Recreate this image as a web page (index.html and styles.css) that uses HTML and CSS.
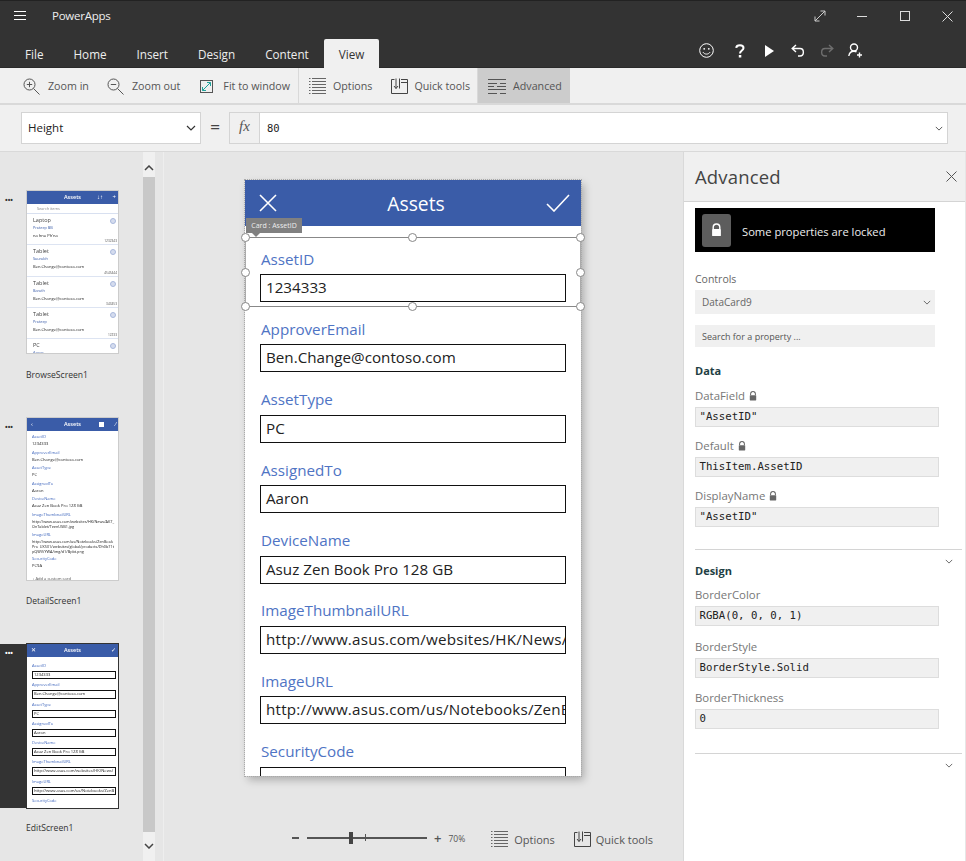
FILE: index.html
```html
<!DOCTYPE html>
<html lang="en">
<head>
<meta charset="utf-8">
<title>PowerApps</title>
<link rel="stylesheet" href="styles.css">
</head>
<body>
<svg class="defs" width="0" height="0" aria-hidden="true">
  <symbol id="lock" viewBox="0 0 10 12"><path d="M2 5V3.500a3 3 0 0 1 6 0V5" fill="none" stroke="currentColor" stroke-width="1.300"/><rect x="1" y="5" width="8" height="6.500" rx=".6" fill="currentColor"/></symbol>
  <symbol id="options" viewBox="0 0 17 16"><path d="M0 .5h1.500M3 .5h14M0 3.500h1.500M3 3.500h14M0 6.500h1.500M3 6.500h14M0 9.500h1.500M3 9.500h14M0 12.500h1.500M3 12.500h14M0 15.500h1.500M3 15.500h14" fill="none" stroke="#666" stroke-width="1"/></symbol>
  <symbol id="quick" viewBox="0 0 17 16"><path d="M.5 1.500h3M.5 1.500v14h16v-14h-6.500M10 4.500h6.500M11 1.500h2M5 .5v10M3 8l2 2.500L7 8M8.500 .5v10" fill="none" stroke="#444" stroke-width="1"/></symbol>
  <symbol id="chev" viewBox="0 0 10 6"><path d="M1 1l4 4 4-4" fill="none" stroke="currentColor" stroke-width="1.200"/></symbol>
</svg>
<div class="app">
  <header class="titlebar">
    <div class="topline">
      <svg class="burger" width="12" height="10" viewBox="0 0 12 10"><path d="M0 .5h12M0 4.500h12M0 8.500h12" stroke="#fff" stroke-width="1"/></svg>
      <span class="brand">PowerApps</span>
      <div class="winbtns">
        <svg width="12" height="12" viewBox="0 0 12 12"><path d="M1 11L11 1M6.500 1H11V5.500M1 6.500V11H5.500" fill="none" stroke="#ccc" stroke-width="1"/></svg>
        <svg width="11" height="11" viewBox="0 0 11 11"><path d="M0 5.500h10" stroke="#ddd" stroke-width="1"/></svg>
        <svg width="10" height="10" viewBox="0 0 10 10"><rect x=".5" y=".5" width="9" height="9" fill="none" stroke="#ddd"/></svg>
        <svg width="11" height="11" viewBox="0 0 11 11"><path d="M.5 .5l10 10M10.500 .5l-10 10" stroke="#ddd" stroke-width="1"/></svg>
      </div>
    </div>
    <div class="tabline">
      <nav class="tabs">
        <span class="tab">File</span><span class="tab">Home</span><span class="tab">Insert</span><span class="tab">Design</span><span class="tab">Content</span><span class="tab active">View</span>
      </nav>
      <div class="actions">
        <svg width="15" height="15" viewBox="0 0 15 15"><circle cx="7.500" cy="7.500" r="6.800" fill="none" stroke="#fff" stroke-width="1"/><circle cx="5.200" cy="5.800" r=".9" fill="#fff"/><circle cx="9.800" cy="5.800" r=".9" fill="#fff"/><path d="M4 9.200c1.500 2.500 5.500 2.500 7 0" fill="none" stroke="#fff"/></svg>
        <svg width="10" height="14" viewBox="0 0 10 14"><path d="M1.200 3.800C1.500 .6 8.500 .4 8.500 4c0 2.500-3.500 2.500-3.500 5.500" fill="none" stroke="#fff" stroke-width="2"/><rect x="3.800" y="11" width="2.500" height="2.500" fill="#fff"/></svg>
        <svg width="9" height="12" viewBox="0 0 9 12"><path d="M0 0l9 6-9 6z" fill="#fff"/></svg>
        <svg width="14" height="14" viewBox="0 0 14 14"><path d="M5 1L1.200 4.500 5 8M1.500 4.500h7.500c4.500 0 4.500 7.500 0 7.500H7" fill="none" stroke="#fff" stroke-width="1.400"/></svg>
        <svg width="14" height="14" viewBox="0 0 14 14"><path d="M9 1l3.800 3.500L9 8M12.500 4.500H5c-4.500 0-4.500 7.500 0 7.500h2" fill="none" stroke="#6e6e6e" stroke-width="1.400"/></svg>
        <svg width="15" height="15" viewBox="0 0 15 15"><circle cx="6" cy="4.500" r="3.500" fill="none" stroke="#fff" stroke-width="1.400"/><path d="M.8 13c.5-3 2.200-4.800 5.200-4.800 1 0 1.800.2 2.500.6" fill="none" stroke="#fff" stroke-width="1.400"/><path d="M11.500 9.500v5M9 12h5" stroke="#fff" stroke-width="1.400"/></svg>
      </div>
    </div>
  </header>

  <div class="toolbar">
    <div class="toolgroup first">
      <span class="tool t-zi"><svg width="17" height="17" viewBox="0 0 17 17"><circle cx="6.500" cy="6.500" r="5.500" fill="none" stroke="#555"/><path d="M10.500 10.500l6 6M3.800 6.500h5.400M6.500 3.800v5.400" stroke="#555" fill="none"/></svg>Zoom in</span>
      <span class="tool t-zo"><svg width="17" height="17" viewBox="0 0 17 17"><circle cx="6.500" cy="6.500" r="5.500" fill="none" stroke="#555"/><path d="M10.500 10.500l6 6M3.800 6.500h5.400" stroke="#555" fill="none"/></svg>Zoom out</span>
      <span class="tool t-fit"><svg width="13" height="13" viewBox="0 0 13 13"><rect x=".5" y=".5" width="12" height="12" fill="none" stroke="#555"/><path d="M2.500 10.500l8-8M7 2.500h3.500V6M2.500 7v3.500H6" fill="none" stroke="#1fa39b"/></svg>Fit to window</span>
    </div>
    <div class="toolgroup">
      <span class="tool t-opt"><svg width="17" height="16"><use href="#options"/></svg>Options</span>
      <span class="tool t-qt"><svg width="17" height="16"><use href="#quick"/></svg>Quick tools</span>
    </div>
    <span class="tool advanced"><svg width="18" height="15" viewBox="0 0 18 15"><path d="M0 .5h18M0 4.500h9M12 4.500h6M0 7.500h6M9 7.500h9M0 10.500h18M0 14.500h9M12 14.500h6" stroke="#555" fill="none"/></svg>Advanced</span>
  </div>

  <div class="formulabar">
    <div class="propselect"><span>Height</span><svg class="chev-s" width="10" height="6"><use href="#chev"/></svg></div>
    <span class="equals">=</span>
    <div class="formula">
      <span class="fx">fx</span>
      <span class="fvalue">80</span>
      <svg class="chev-f" width="8" height="5"><use href="#chev"/></svg>
    </div>
  </div>

  <main class="workspace">
    <aside class="screens">
      <div class="screen-list">
        <section class="screen">
          <div class="thumb-row">
            <span class="dots">•••</span>
            <div class="thumb">
              <div class="th-head"><span class="th-title">Assets</span><span class="th-ic r1">↓↑</span><span class="th-ic r2">+</span></div>
              <div class="th-search">Search items</div>
              <div class="th-item sep"><b>Laptop</b><i>Prateep BB</i><em>na hna Ph'na</em><u>1232343</u><s></s></div>
              <div class="th-item sep"><b>Tablet</b><i>Saurabh</i><em>Ben.Change@contoso.com</em><u>4545444</u><s></s></div>
              <div class="th-item sep"><b>Tablet</b><i>Barath</i><em>Ben.Change@contoso.com</em><u>343453</u><s></s></div>
              <div class="th-item sep"><b>Tablet</b><i>Prateep</i><em>Ben.Change@contoso.com</em><u>12233</u><s></s></div>
              <div class="th-item"><b>PC</b><i>Aaron</i><s></s></div>
            </div>
          </div>
          <p class="screen-name">BrowseScreen1</p>
        </section>
        <section class="screen">
          <div class="thumb-row">
            <span class="dots">•••</span>
            <div class="thumb">
              <div class="th-head"><span class="th-ic l1">‹</span><span class="th-title">Assets</span><span class="th-ic r1 sq"></span><span class="th-ic r2">⁄</span></div>
              <div class="th-detail">
                <i>AssetID</i><em>1234333</em>
                <i>ApproverEmail</i><em>Ben.Change@contoso.com</em>
                <i>AssetType</i><em>PC</em>
                <i>AssignedTo</i><em>Aaron</em>
                <i>DeviceName</i><em>Asuz Zen Book Pro 128 GB</em>
                <i>ImageThumbnailURL</i><em class="wrap">http://www.asus.com/websites/HK/News/AK7_OnTablet/TeenUSB1.jpg</em>
                <i>ImageURL</i><em class="wrap">http://www.asus.com/us/Notebooks/ZenBook_Pro_UX501/websites/global/products/Dh0b71tpQWV/YWA/img/d1/Bpbt.png</em>
                <i>SecurityCode</i><em>PC9A</em>
                <em class="add">+ Add a custom card</em>
              </div>
            </div>
          </div>
          <p class="screen-name">DetailScreen1</p>
        </section>
        <section class="screen">
          <div class="thumb-row selected">
            <span class="dots">•••</span>
            <div class="thumb dark">
              <div class="th-head"><span class="th-ic l1">✕</span><span class="th-title">Assets</span><span class="th-ic r2">✓</span></div>
              <div class="th-edit">
                <i>AssetID</i><em>1234333</em>
                <i>ApproverEmail</i><em>Ben.Change@contoso.com</em>
                <i>AssetType</i><em>PC</em>
                <i>AssignedTo</i><em>Aaron</em>
                <i>DeviceName</i><em>Asuz Zen Book Pro 128 GB</em>
                <i>ImageThumbnailURL</i><em>http://www.asus.com/websites/HK/News/</em>
                <i>ImageURL</i><em>http://www.asus.com/us/Notebooks/ZenB</em>
                <i>SecurityCode</i>
              </div>
            </div>
          </div>
          <p class="screen-name edit">EditScreen1</p>
        </section>
      </div>
      <div class="scrollbar">
        <span class="sb-btn top"><svg width="10" height="6" viewBox="0 0 10 6"><path d="M1 5l4-4 4 4" fill="none" stroke="#444" stroke-width="1.500"/></svg></span>
        <span class="sb-thumb"></span>
        <span class="sb-btn bottom"><svg width="10" height="6" viewBox="0 0 10 6"><path d="M1 1l4 4 4-4" fill="none" stroke="#444" stroke-width="1.500"/></svg></span>
      </div>
    </aside>

    <section class="canvas">
      <div class="phone">
        <div class="phone-head">
          <svg width="18" height="18" viewBox="0 0 18 18"><path d="M1 1l16 16M17 1L1 17" stroke="#fff" stroke-width="1.600"/></svg>
          <span class="phone-title">Assets</span>
          <svg width="24" height="18" viewBox="0 0 24 18"><path d="M1 10l7 7L23 1" fill="none" stroke="#fff" stroke-width="1.600"/></svg>
        </div>
        <div class="cards">
          <div class="card"><label class="card-label">AssetID</label><div class="card-input">1234333</div></div>
          <div class="card"><label class="card-label">ApproverEmail</label><div class="card-input">Ben.Change@contoso.com</div></div>
          <div class="card"><label class="card-label">AssetType</label><div class="card-input">PC</div></div>
          <div class="card"><label class="card-label">AssignedTo</label><div class="card-input">Aaron</div></div>
          <div class="card"><label class="card-label">DeviceName</label><div class="card-input">Asuz Zen Book Pro 128 GB</div></div>
          <div class="card"><label class="card-label">ImageThumbnailURL</label><div class="card-input long">http://www.asus.com/websites/HK/News/</div></div>
          <div class="card"><label class="card-label">ImageURL</label><div class="card-input long">http://www.asus.com/us/Notebooks/ZenB</div></div>
          <div class="card"><label class="card-label">SecurityCode</label><div class="card-input">PC9A</div></div>
        </div>
        <div class="selection">
          <span class="sel-tip">Card : AssetID</span>
          <span class="h tl"></span><span class="h tc"></span><span class="h tr"></span>
          <span class="h ml"></span><span class="h mr"></span>
          <span class="h bl"></span><span class="h bc"></span><span class="h br"></span>
        </div>
      </div>
      <div class="statusbar">
        <span class="zoom-minus"></span>
        <span class="slider"><span class="knob"></span><span class="tick"></span></span>
        <span class="zoom-plus">+</span>
        <span class="zoom-val">70%</span>
        <span class="tool s-opt"><svg width="17" height="16"><use href="#options"/></svg>Options</span>
        <span class="tool s-qt"><svg width="17" height="16"><use href="#quick"/></svg>Quick tools</span>
      </div>
    </section>

    <aside class="panel">
      <div class="panel-head"><h2>Advanced</h2><svg width="11" height="11" viewBox="0 0 11 11"><path d="M.5 .5l10 10M10.500 .5l-10 10" stroke="#555" stroke-width="1"/></svg></div>
      <div class="panel-body">
        <div class="locked">
          <span class="lock-box"><svg width="11" height="14"><use href="#lock"/></svg></span>
          <span class="lock-text">Some properties are locked</span>
        </div>
        <p class="ctl-label">Controls</p>
        <div class="ctl-select"><span>DataCard9</span><svg width="8" height="5"><use href="#chev"/></svg></div>
        <div class="ctl-search">Search for a property ...</div>
        <h3 class="sect first">Data</h3>
        <div class="prop"><p>DataField <svg width="8" height="10"><use href="#lock"/></svg></p><div class="val">"AssetID"</div></div>
        <div class="prop"><p>Default <svg width="8" height="10"><use href="#lock"/></svg></p><div class="val">ThisItem.AssetID</div></div>
        <div class="prop"><p>DisplayName <svg width="8" height="10"><use href="#lock"/></svg></p><div class="val">"AssetID"</div></div>
        <div class="divider"><svg width="8" height="5"><use href="#chev"/></svg></div>
        <h3 class="sect">Design</h3>
        <div class="prop p2"><p>BorderColor</p><div class="val">RGBA(0, 0, 0, 1)</div></div>
        <div class="prop p2"><p>BorderStyle</p><div class="val">BorderStyle.Solid</div></div>
        <div class="prop p2"><p>BorderThickness</p><div class="val">0</div></div>
        <div class="divider d2"><svg width="8" height="5"><use href="#chev"/></svg></div>
      </div>
    </aside>
  </main>
</div>
</body>
</html>
```

FILE: styles.css
```css
* { box-sizing: border-box; }
html, body { margin: 0; padding: 0; height: 100%; }
body { font-family: "Open Sans", "Noto Sans", sans-serif; color: #333; background: #e6e6e6; overflow: hidden; }
p, h2, h3 { margin: 0; font-weight: normal; }
.defs { position: absolute; }
.app { width: 966px; height: 861px; display: flex; flex-direction: column; }

/* Title bar */
.titlebar { height: 68px; background: #333; border-top: 1px solid #222; border-bottom: 1px solid #2a2a2a; color: #fff; display: flex; flex-direction: column; }
.topline { height: 38px; display: flex; align-items: center; padding: 0 0 9px 14px; }
.burger { display: block; }
.brand { margin-left: 26px; font-size: 11.500px; letter-spacing: -.25px; color: #eee; }
.winbtns { margin-left: auto; display: flex; align-items: center; width: 152px; gap: 32px; padding-top: 1px; }
.winbtns svg:nth-child(2) { margin-left: -1px; }
.tabline { flex: 1; display: flex; align-items: flex-end; }
.tabs { display: flex; padding-left: 10px; margin-bottom: -1px; }
.tab { height: 29px; padding: 5px 15px 0; font-size: 11.700px; color: #eee; line-height: 20px; }
.tab.active { background: #f0f0f0; color: #333; border-radius: 2px 2px 0 0; }
.actions { margin-left: auto; display: flex; align-items: center; padding-bottom: 9px; width: 267px; }
.actions svg:nth-child(2) { margin-left: 21px; }
.actions svg:nth-child(3) { margin-left: 20px; }
.actions svg:nth-child(4) { margin-left: 17px; }
.actions svg:nth-child(5) { margin-left: 15px; }
.actions svg:nth-child(6) { margin-left: 14px; }

/* Toolbar */
.toolbar { height: 37px; background: #f0f0f0; border-bottom: 2px solid #d9d9d9; display: flex; color: #555; }
.toolgroup { display: flex; align-items: center; border-right: 1px solid #d9d9d9; padding-top: 1px; }
.tool { display: inline-flex; align-items: center; font-size: 10.700px; color: #555; white-space: nowrap; }
.toolgroup.first { width: 299px; padding-left: 23px; }
.toolgroup:nth-child(2) { width: 179px; padding-left: 10px; }
.t-zi svg { margin-right: 8px; }
.t-zo { margin-left: 18px; }
.t-zo svg { margin-right: 8px; }
.t-fit { margin-left: 20px; }
.t-fit svg { margin-right: 10px; }
.t-opt svg { margin-right: 7px; }
.t-qt { margin-left: 19px; }
.t-qt svg { margin-right: 6px; }
.advanced { width: 92px; background: #ccc; padding: 1px 0 0 10px; gap: 7px; height: 35px; }

/* Formula bar */
.formulabar { height: 46px; background: #f0f0f0; display: flex; align-items: flex-start; padding: 7px 0 0 21px; }
.propselect { width: 180px; height: 32px; background: #fff; border: 1px solid #d4d4d4; display: flex; align-items: center; justify-content: space-between; padding: 0 4px 1px 6px; font-size: 11.500px; color: #222; }
.chev-s { color: #333; }
.equals { width: 28px; text-align: center; font-size: 17px; font-weight: 600; line-height: 30px; color: #444; }
.formula { width: 719px; height: 32px; background: #fff; border: 1px solid #d4d4d4; display: flex; align-items: center; }
.fx { width: 30px; height: 30px; background: #f0f0f0; border-right: 1px solid #d4d4d4; font-family: "Liberation Serif", serif; font-style: italic; font-size: 15px; text-align: center; line-height: 27px; color: #555; }
.fvalue { margin-left: 7px; font-family: "DejaVu Sans Mono", monospace; font-size: 10.500px; color: #222; }
.chev-f { margin-left: auto; margin-right: 4px; color: #555; }

/* Workspace */
.workspace { flex: 1; display: flex; min-height: 0; border-top: 1px solid #d9d9d9; }
.screens { width: 164px; display: flex; background: #e6e6e6; border-right: 1px solid #eeeeee; padding-right: 8px; }
.screen-list { width: 143px; padding-top: 39px; flex: none; }
.screen { height: 227px; }
.thumb-row { display: flex; align-items: flex-start; height: 162px; padding-left: 5px; }
.thumb-row.selected { background: #333; width: 118px; height: 164px; margin-top: -1px; }
.dots { width: 22px; font-size: 7px; font-weight: 700; line-height: 20px; color: #333; white-space: nowrap; }
.selected .dots { color: #fff; }
.thumb { width: 91px; height: 162px; background: #fff; outline: 1px solid #ccc; overflow: hidden; display: flex; flex-direction: column; font-size: 3.500px; filter: blur(.25px); }
.thumb.dark { height: 164px; outline-color: #333; }
.th-head { height: 13px; flex: none; background: #3a5ca8; color: #fff; position: relative; text-align: center; line-height: 12px; }
.th-title { font-size: 5.500px; font-weight: 600; }
.th-ic { position: absolute; top: 0; font-size: 6px; }
.r1 { right: 15px; }
.r2 { right: 2px; }
.l1 { left: 4px; }
.sq { width: 5px; height: 5px; background: #fff; top: 4px; right: 14px; }
.th-search { height: 10px; padding-left: 10px; font-size: 3.800px; line-height: 10px; color: #888; border-bottom: 1px solid #d8e0f0; flex: none; }
.th-item { height: 31.300px; padding: 2px 0 0 6px; position: relative; display: flex; flex-direction: column; flex: none; }
.th-item.sep { border-bottom: 1px solid #dde4f2; }
.th-item b { font-weight: normal; font-size: 5.500px; line-height: 8px; color: #444; }
.th-item i { font-style: normal; font-size: 3.800px; line-height: 8px; color: #3a5ca8; }
.th-item em { font-style: normal; font-size: 4.100px; line-height: 7px; color: #222; }
.th-item u { text-decoration: none; font-size: 3.200px; color: #555; position: absolute; right: 1px; bottom: 1px; }
.th-item s { position: absolute; right: 2px; top: 4px; width: 6px; height: 6px; border-radius: 50%; background: #d5dcee; border: 1px solid #a9b8dc; }
.th-detail { padding: 1.500px 0 0 5px; display: flex; flex-direction: column; flex: 1; }
.th-detail i { font-style: normal; font-size: 4px; line-height: 6px; color: #3f66bd; margin-top: 1.600px; }
.th-detail em { font-style: normal; font-size: 4.100px; line-height: 6px; color: #222; margin-top: 1px; margin-bottom: 1px; white-space: nowrap; }
.th-detail em.wrap { white-space: normal; word-break: break-all; width: 84px; font-size: 3.800px; line-height: 5px; }
.th-detail em.add { margin-top: 6px; color: #555; }
.th-edit { padding: 3px 0 0 5px; display: flex; flex-direction: column; flex: 1; }
.th-edit i { font-style: normal; font-size: 4px; line-height: 6px; color: #3f66bd; margin-top: 3px; }
.th-edit em { font-style: normal; font-size: 4.100px; line-height: 5px; color: #222; flex: none; width: 84px; height: 8.300px; margin-top: 2px; padding-left: 1px; border: 1px solid #111; overflow: hidden; white-space: nowrap; }
.screen-name { font-size: 8.600px; line-height: 13px; color: #333; padding: 16px 0 0 26px; }
.screen:nth-child(2) .screen-name { padding-top: 15px; }
.screen-name.edit { padding-top: 14px; }
.scrollbar { width: 12px; flex: none; display: flex; flex-direction: column; background: #c8c8c8; }
.sb-btn { background: #f0f0f0; display: flex; justify-content: center; flex: none; }
.sb-btn.top { height: 25px; align-items: flex-end; padding-bottom: 6px; }
.sb-btn.bottom { height: 29px; align-items: flex-start; padding-top: 11px; }
.sb-thumb { flex: 1; background: #c8c8c8; }

/* Canvas */
.canvas { width: 519px; background: #e6e6e6; display: flex; flex-direction: column; padding: 28px 0 0 81px; }
.phone { position: relative; width: 336px; height: 596px; background: #fff; box-shadow: 3px 4px 8px rgba(0,0,0,.25); outline: 1px dotted #aaa; }
.phone-head { height: 46px; background: #3a5ca8; display: flex; align-items: center; justify-content: space-between; padding: 0 11px 0 14px; color: #fff; }
.phone-title { font-size: 19.300px; margin-left: 9px; }
.cards { height: 550px; overflow: hidden; padding-top: 10.500px; }
.card { height: 70.400px; padding: 11px 15px 0; }
.card-label { display: block; font-size: 15.200px; line-height: 22px; color: #4f74c4; padding-left: 1px; }
.card-input { margin-top: 4.500px; height: 28px; border: 1.500px solid #111; padding-left: 5px; font-size: 15.200px; line-height: 25px; color: #222; white-space: nowrap; overflow: hidden; }
.card-input.long { letter-spacing: .2px; }
.selection { position: absolute; left: 0; top: 56.500px; width: 336px; height: 70px; border: 1px solid #888; border-left-color: #aaa; border-right-color: #aaa; }
.sel-tip { position: absolute; left: 0; top: -20px; width: 56px; height: 15px; background: #808080; color: #eee; font-size: 7px; line-height: 15px; text-align: center; }
.sel-tip::after { content: ""; position: absolute; left: 6px; top: 15px; border: 4px solid transparent; border-top-color: #808080; border-bottom: 0; }
.h { position: absolute; width: 9px; height: 9px; border-radius: 50%; background: #fff; border: 1px solid #888; }
.tl { left: -5px; top: -5px; } .tc { left: 162px; top: -5px; } .tr { right: -5px; top: -5px; }
.ml { left: -5px; top: 30px; } .mr { right: -5px; top: 30px; }
.bl { left: -5px; bottom: -5px; } .bc { left: 162px; bottom: -5px; } .br { right: -5px; bottom: -5px; }

.statusbar { display: flex; align-items: center; height: 20px; margin-top: 53px; margin-left: 47px; color: #555; }
.zoom-minus { width: 7px; height: 2px; background: #555; margin-bottom: 2px; }
.slider { position: relative; width: 120px; height: 1.500px; background: #555; margin: 0 0 2px 8px; }
.knob { position: absolute; left: 42px; top: -5px; width: 4px; height: 12px; background: #444; }
.tick { position: absolute; left: 58px; top: -3px; width: 1px; height: 7px; background: #555; }
.zoom-plus { margin: 0 0 2px 7px; font-size: 13px; font-weight: 600; line-height: 12px; }
.zoom-val { margin: 0 0 2px 7px; font-size: 8.500px; }
.tool.s-opt, .tool.s-qt { font-size: 11px; }
.s-opt { margin-left: 26px; }
.s-opt svg { margin-right: 6px; }
.s-qt { margin-left: 19px; }
.s-qt svg { margin-right: 5px; }

/* Right panel */
.panel { width: 282px; background: #fff; border-left: 1px solid #d9d9d9; display: flex; flex-direction: column; }
.panel-head { height: 50px; background: #f0f0f0; border-bottom: 1px solid #d4d4d4; display: flex; align-items: center; justify-content: space-between; padding: 0 8px 0 11px; flex: none; }
.panel-head h2 { font-size: 18.500px; color: #444; letter-spacing: .15px; }
.panel-body { padding: 6px 0 0 11px; }
.locked { width: 240px; height: 44px; background: #000; color: #eee; display: flex; align-items: center; font-size: 11.200px; }
.lock-box { width: 29px; height: 33px; margin: 0 11px 0 7px; background: #5d5d5d; border-radius: 3px; display: flex; align-items: center; justify-content: center; color: #fff; }
.lock-text { margin-top: 2px; }
.ctl-label { font-size: 10.500px; color: #666; margin-top: 19px; line-height: 16px; }
.ctl-select { width: 240px; height: 24px; margin-top: 3px; background: #f0f0f0; display: flex; align-items: center; justify-content: space-between; padding: 0 4px 0 7px; font-size: 10px; color: #666; }
.ctl-search { width: 240px; height: 22px; margin-top: 11px; background: #f0f0f0; padding: 1px 0 0 7px; font-size: 9px; line-height: 21px; color: #555; }
.sect { font-size: 11px; font-weight: 700; color: #1f3f44; line-height: 16px; margin: 0 0 8.500px; }
.sect.first { margin: 16px 0 9px; }
.prop { margin-bottom: 11px; }
.prop p { font-size: 11.400px; line-height: 16px; color: #777; display: flex; align-items: center; gap: 4px; height: 16px; }
.prop svg { color: #666; }
.val { width: 244px; height: 20px; margin-top: 3px; background: #f0f0f0; border: 1px solid #ddd; padding-left: 3.500px; font-family: "DejaVu Sans Mono", monospace; font-size: 10.700px; line-height: 17px; color: #222; }
.p2 { margin-bottom: 12.500px; }
.divider { width: 267px; margin-top: 22px; border-top: 1px solid #d4d4d4; height: 13.500px; display: flex; justify-content: flex-end; align-items: flex-start; padding: 9px 9px 0 0; color: #666; }
.d2 { margin-top: 24px; }
```
